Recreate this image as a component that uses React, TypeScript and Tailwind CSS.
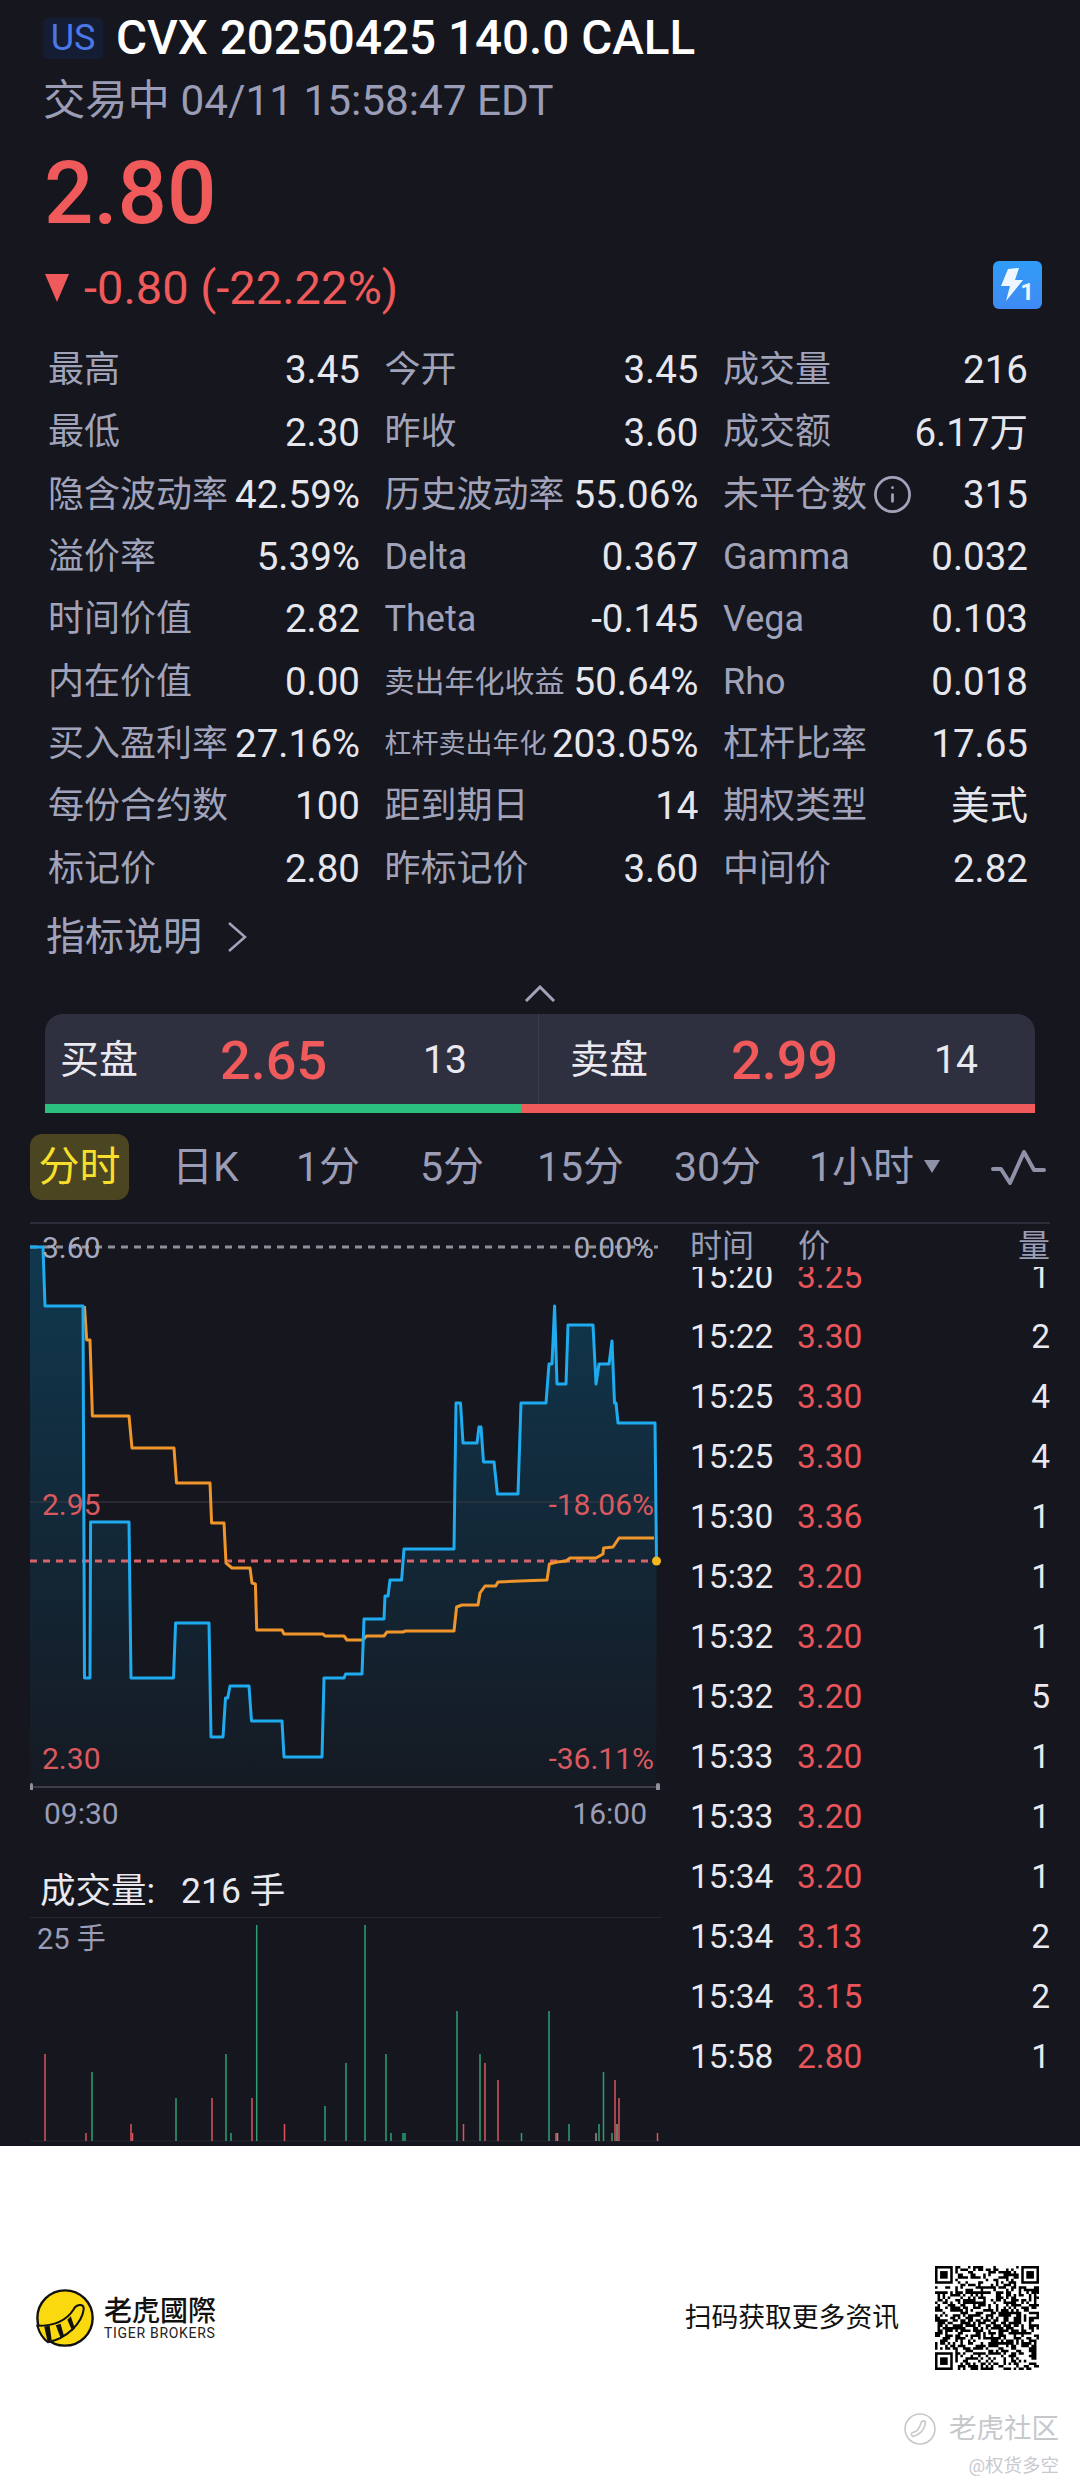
import React from "react";
import { Info } from "lucide-react";

const stats = [
  ["最高", "3.45", "今开", "3.45", "成交量", "216"],
  ["最低", "2.30", "昨收", "3.60", "成交额", "6.17万"],
  ["隐含波动率", "42.59%", "历史波动率", "55.06%", "未平仓数", "315"],
  ["溢价率", "5.39%", "Delta", "0.367", "Gamma", "0.032"],
  ["时间价值", "2.82", "Theta", "-0.145", "Vega", "0.103"],
  ["内在价值", "0.00", "卖出年化收益", "50.64%", "Rho", "0.018"],
  ["买入盈利率", "27.16%", "杠杆卖出年化", "203.05%", "杠杆比率", "17.65"],
  ["每份合约数", "100", "距到期日", "14", "期权类型", "美式"],
  ["标记价", "2.80", "昨标记价", "3.60", "中间价", "2.82"],
];

const trades = [
  ["15:20", "3.25", "1"],
  ["15:22", "3.30", "2"],
  ["15:25", "3.30", "4"],
  ["15:25", "3.30", "4"],
  ["15:30", "3.36", "1"],
  ["15:32", "3.20", "1"],
  ["15:32", "3.20", "1"],
  ["15:32", "3.20", "5"],
  ["15:33", "3.20", "1"],
  ["15:33", "3.20", "1"],
  ["15:34", "3.20", "1"],
  ["15:34", "3.13", "2"],
  ["15:34", "3.15", "2"],
  ["15:58", "2.80", "1"],
];

const blueLine =
  "30,1247 43,1247 45,1306 83,1306 84.5,1678 90,1678 90.6,1522 129,1522 131,1678 173.5,1678 175.6,1623 209,1623 211,1737 223,1737 225.5,1698 227.7,1698 230,1686 249,1686 251.5,1721 282,1721 284,1757 322,1757 324,1678 344,1678 345.6,1674 362,1674 364,1619 384,1619 385,1596 388,1596 390,1580 401.6,1580 404,1549 454,1549 456,1403 460.5,1403 463,1443 477,1443 479,1427 481,1427 483.5,1462 494,1462 497.4,1494 518,1494 521,1403 546,1403 549,1364 552,1364 554.6,1306 557,1384 566,1384 568,1325 593,1325 596,1384 599,1364 609,1364 612,1341 614.5,1403 616,1403 618,1423 655,1423 656.5,1561";

const orangeLine =
  "84.5,1306 86.7,1340 90,1340 92.4,1416 129,1416 132,1448 174,1448 176.5,1483 210,1483 211.6,1523 224,1523 226,1563 232,1568 250,1568 252,1583 255.4,1584 256.7,1630 282,1630 284,1634 323,1634 325,1636 344,1636 347,1640 363,1640 366.4,1636 384,1636 387,1632 403,1632 405.5,1631 454,1631 456.6,1607 462,1605 478,1605 480,1593 485,1586 495.7,1586 498,1582 520,1581 547,1580 549.4,1564 557,1562 566,1561 570,1558 596,1558 603,1554 603.6,1548 613,1547 619,1538 654,1538";

// x, bar top, colour
const volumeBars: [number, number, string][] = [
  [45, 2053, "#d9555c"], [86, 2132, "#d9555c"], [92, 2071, "#2f9e74"], [131, 2123, "#d9555c"], [132.5, 2132, "#d9555c"],
  [176, 2097, "#2f9e74"], [212, 2097, "#d9555c"], [226, 2053, "#2f9e74"], [231, 2132, "#2f9e74"], [252, 2097, "#d9555c"],
  [256.7, 1924, "#2f9e74"], [284.5, 2123, "#d9555c"], [325, 2105, "#2f9e74"], [346, 2062, "#2f9e74"], [365, 1924, "#2f9e74"],
  [386, 2053, "#2f9e74"], [391, 2132, "#2f9e74"], [403, 2132, "#2f9e74"], [405, 2132, "#2f9e74"], [457, 2010, "#2f9e74"],
  [463.5, 2123, "#d9555c"], [480, 2053, "#2f9e74"], [485, 2062, "#d9555c"], [498, 2079, "#d9555c"], [521.5, 2132, "#2f9e74"],
  [549, 2010, "#2f9e74"], [556, 2132, "#d9555c"], [557.5, 2132, "#a88a80"], [569, 2123, "#2f9e74"], [596, 2132, "#a88a80"],
  [599, 2123, "#2f9e74"], [603.5, 2071, "#2f9e74"], [612, 2132, "#2f9e74"], [615, 2079, "#d9555c"], [617, 2123, "#8f9a80"],
  [619, 2097, "#d9555c"], [657.5, 2132, "#d9555c"],
];

function qrPath() {
  const n = 41;
  let d = "";
  let seed = 73;
  const inFinder = (x: number, y: number) =>
    (x < 8 && y < 8) || (x >= n - 8 && y < 8) || (x < 8 && y >= n - 8);
  for (let y = 0; y < n; y++) {
    for (let x = 0; x < n; x++) {
      seed = (seed * 1103515245 + 12345) & 0x7fffffff;
      if (!inFinder(x, y) && (seed >> 16) % 100 < 50) d += `M${x} ${y}h1v1h-1z`;
    }
  }
  return d;
}

function Finder({ x, y }: { x: number; y: number }) {
  return (
    <>
      <rect x={x} y={y} width="7" height="7" fill="#000" />
      <rect x={x + 1} y={y + 1} width="5" height="5" fill="#fff" />
      <rect x={x + 2} y={y + 2} width="3" height="3" fill="#000" />
    </>
  );
}

function ChartLabel({ className, children }: { className: string; children: React.ReactNode }) {
  return <span className={`absolute text-[30px] leading-[36px] ${className}`}>{children}</span>;
}

const tabs = [
  { label: "日K", cls: "ml-[43px] w-[65px]" },
  { label: "1分", cls: "ml-[59px] w-[63px]" },
  { label: "5分", cls: "ml-[61px] w-[63px]" },
  { label: "15分", cls: "ml-[54px] w-[89px]" },
  { label: "30分", cls: "ml-[48px] w-[88px]" },
  { label: "1小时", cls: "ml-[47px] w-[108px]" },
];

export default function App() {
  return (
    <div className="w-[1080px] h-[2491px] bg-white overflow-hidden [font-family:Roboto,'Noto_Sans_CJK_SC',sans-serif]">
      <div className="h-[2146px] bg-[#15161e] overflow-hidden">
        {/* header */}
        <div className="pt-[18px] ml-[43px] h-[59px] flex items-center">
          <span className="w-[60px] h-[41px] rounded-[5px] bg-[#141d33] text-[#4a78e8] text-[36px] leading-[41px] text-center">US</span>
          <span className="ml-[13px] text-white text-[47.6px] leading-[41px] font-medium whitespace-nowrap">CVX 20250425 140.0 CALL</span>
        </div>
        <div className="mt-[19px] ml-[43px] h-[45px] text-[#9a9db5] text-[42.3px] leading-[46px] whitespace-nowrap">交易中 04/11 15:58:47 EDT</div>
        <div className="mt-[20px] ml-[44px] h-[100px] text-[#f05a5a] text-[87px] leading-[100px] font-medium">2.80</div>
        <div className="mt-[20px] ml-[45px] mr-[38px] h-[50px] flex items-center justify-between">
          <div className="flex items-center">
            <span className="w-0 h-0 border-l-[12px] border-r-[12px] border-t-[28px] border-l-transparent border-r-transparent border-t-[#f05a5a]" />
            <span className="ml-[15px] text-[#f05a5a] text-[47px] leading-[50px] whitespace-nowrap">-0.80 (-22.22%)</span>
          </div>
          <div className="relative mb-[7px] w-[49px] h-[48px] rounded-[6px] bg-gradient-to-b from-[#2f9cf6] to-[#3f8af5]">
            <svg viewBox="0 0 49 48" className="absolute inset-0 w-full h-full">
              <path d="M15 8 L26 7 L22 19 L30 19 L13 40 L17 25 L8 25 Z" fill="#eef6ff" />
            </svg>
            <span className="absolute right-[8px] bottom-[5px] text-[#eef6ff] text-[24px] leading-[24px] font-bold">1</span>
          </div>
        </div>

        {/* stats */}
        <div className="mt-[26px] ml-[48px] w-[980px] grid grid-cols-[312px_314px_305px] gap-x-[24.5px] auto-rows-[62.3px]">
          {stats.map((row) =>
            [0, 2, 4].map((i) => (
              <div key={row[i] + i} className="flex items-center justify-between">
                <span
                  className={`text-[#a0a3ba] flex items-center whitespace-nowrap ${
                    row[i] === "杠杆卖出年化" ? "text-[27px]" : row[i] === "卖出年化收益" ? "text-[30px]" : "text-[36px]"
                  }`}
                >
                  {row[i]}
                  {row[i] === "未平仓数" && <Info className="ml-[5px] w-[41px] h-[41px]" strokeWidth={1.6} />}
                </span>
                <span className="text-[#e6e7ee] text-[38.5px] whitespace-nowrap">{row[i + 1]}</span>
              </div>
            ))
          )}
        </div>

        <div className="mt-[17px] ml-[46px] h-[40px] flex items-center text-[#a0a3ba] text-[39px] leading-[40px]">
          指标说明
          <svg viewBox="0 0 22 30" className="ml-[24px] w-[22px] h-[30px]" fill="none" stroke="#a0a3ba" strokeWidth="2.5">
            <path d="M3 1 L19 15 L3 29" />
          </svg>
        </div>

        <div className="mt-[28px] flex justify-center h-[17px]">
          <svg viewBox="0 0 32 17" className="w-[32px] h-[17px]" fill="none" stroke="#a0a3ba" strokeWidth="3">
            <path d="M2 16 L16 2 L30 16" />
          </svg>
        </div>

        {/* bid / ask */}
        <div className="relative mt-[12px] ml-[45px] w-[990px] h-[99px] rounded-t-[18px] bg-[#2f303f] overflow-hidden">
          <div className="flex h-[90px] items-center text-[#e9e9ef]">
            <div className="w-[494px] flex items-center border-r border-[#3b3c4c] h-full pt-[4px]">
              <span className="ml-[15px] w-[160px] text-[39px]">买盘</span>
              <span className="w-[203px] text-[#f05a5a] text-[54px] font-medium">2.65</span>
              <span className="text-[39px]">13</span>
            </div>
            <div className="flex items-center h-full pt-[4px]">
              <span className="ml-[31px] w-[161px] text-[39px]">卖盘</span>
              <span className="w-[203px] text-[#f05a5a] text-[54px] font-medium">2.99</span>
              <span className="text-[39px]">14</span>
            </div>
          </div>
          <div className="flex h-[9px]">
            <div className="w-[476px] bg-[#2cc07f]" />
            <div className="flex-1 bg-[#f05a5a]" />
          </div>
        </div>

        {/* period tabs */}
        <div className="mt-[21px] ml-[30px] h-[66px] flex items-center text-[#9a9db5] text-[41px]">
          <span className="w-[99px] h-[66px] rounded-[12px] bg-[#4b4522] text-[#f7df2b] flex items-center justify-center pt-[3px]">分时</span>
          {tabs.map((tab) => (
            <span key={tab.label} className={`${tab.cls} whitespace-nowrap pt-[3px]`}>{tab.label}</span>
          ))}
          <span className="ml-[7px] w-0 h-0 border-l-[8px] border-r-[8px] border-t-[13px] border-l-transparent border-r-transparent border-t-[#8e91a8]" />
          <svg viewBox="993 1150 56 36" className="ml-[51px] w-[56px] h-[36px]" fill="none" stroke="#8e91a8" strokeWidth="4" strokeLinecap="round" strokeLinejoin="round">
            <path d="M995 1170 L1003 1170 L1012 1184 L1026 1153 L1036 1171 L1046 1171" />
          </svg>
        </div>

        <div className="mt-[22px] ml-[30px] w-[1020px] h-[2px] bg-[#2c2d38]" />

        <div className="flex">
          {/* left: charts */}
          <div className="ml-[30px] w-[632px]">
            <div className="relative h-[566px]">
              <svg viewBox="30 1224 632 566" className="w-[632px] h-[566px]" fill="none">
                <defs>
                  <linearGradient id="area" gradientUnits="userSpaceOnUse" x1="0" y1="1247" x2="0" y2="1785">
                    <stop offset="0" stopColor="#10384f" />
                    <stop offset="1" stopColor="#151a23" />
                  </linearGradient>
                </defs>
                <polygon points={`${blueLine} 656.5,1785 30,1785`} fill="url(#area)" />
                <line x1="30" x2="658" y1="1247" y2="1247" stroke="#8e909c" strokeWidth="3" strokeDasharray="7 6" />
                <line x1="30" x2="656" y1="1502" y2="1502" stroke="#3a3b46" strokeWidth="1" />
                <line x1="30" x2="656" y1="1561" y2="1561" stroke="#d9636b" strokeWidth="3" strokeDasharray="7 6" />
                <polyline points={orangeLine} stroke="#f0952a" strokeWidth="3" strokeLinejoin="round" />
                <polyline points={blueLine} stroke="#1fabf0" strokeWidth="3" strokeLinejoin="round" />
                <circle cx="656.5" cy="1561" r="4.5" fill="#f5b71f" />
                <line x1="32" x2="657" y1="1787" y2="1787" stroke="#4a4b55" strokeWidth="1.5" />
                <rect x="30" y="1783" width="3" height="8" rx="1.5" fill="#8e909c" />
                <rect x="656" y="1783" width="4" height="8" rx="2" fill="#8e909c" />
              </svg>
              <ChartLabel className="left-[12px] top-[6px] text-[#a8abc0]">3.60</ChartLabel>
              <ChartLabel className="right-[8px] top-[6px] text-[#a8abc0]">0.00%</ChartLabel>
              <ChartLabel className="left-[12px] top-[263px] text-[#d9595f]">2.95</ChartLabel>
              <ChartLabel className="right-[8px] top-[263px] text-[#d9595f]">-18.06%</ChartLabel>
              <ChartLabel className="left-[12px] top-[517px] text-[#d9595f]">2.30</ChartLabel>
              <ChartLabel className="right-[8px] top-[517px] text-[#d9595f]">-36.11%</ChartLabel>
            </div>
            <div className="h-[48px] pl-[14px] pr-[15px] flex items-center justify-between text-[#9a9db5] text-[30px]">
              <span>09:30</span>
              <span>16:00</span>
            </div>
            <div className="mt-[32px] h-[44px] pl-[10px] flex items-center text-[#e9e9ef] text-[35.5px] whitespace-nowrap">
              成交量:<span className="ml-[26px]">216 手</span>
            </div>
            <div className="relative mt-[3px] h-[229px] border-t border-[#24252e]">
              <svg viewBox="30 1917 632 229" className="w-[632px] h-[229px]">
                <line x1="30" x2="660" y1="2140" y2="2140" stroke="#24252e" strokeWidth="1" />
                {volumeBars.map(([x, top, color], i) => (
                  <rect key={i} x={x - 0.75} y={top} width="1.5" height={2140 - top} fill={color} />
                ))}
              </svg>
              <span className="absolute left-[7px] top-[3px] text-[#9a9db5] text-[29px] leading-[36px]">25 手</span>
            </div>
          </div>

          {/* right: trades */}
          <div className="ml-[28px] w-[360px]">
            <div className="relative h-[43px] text-[#9a9db5] text-[32px] leading-[44px]">
              <span>时间</span>
              <span className="absolute left-[108px]">价</span>
              <span className="absolute right-0">量</span>
            </div>
            <div className="h-[879px] overflow-hidden">
              <div className="-mt-[20px]">
                {trades.map(([time, price, qty], i) => (
                  <div key={i} className="flex h-[60px] items-center pt-[1px] text-[33.5px] text-[#e9e9ef]">
                    <span className="w-[107px]">{time}</span>
                    <span className="text-[#e8555a]">{price}</span>
                    <span className="ml-auto">{qty}</span>
                  </div>
                ))}
              </div>
            </div>
          </div>
        </div>
      </div>

      {/* footer */}
      <div className="relative h-[345px]">
        <div className="pt-[144px] pl-[36px] pr-[41px] flex items-center h-[200px]">
          <svg viewBox="20 20 170 170" className="w-[58px] h-[58px] shrink-0">
            <circle cx="105" cy="105" r="81" fill="#fbd90f" stroke="#111" strokeWidth="7" />
            <path d="M24 128 C 60 128 105 120 130 80 C 137 66 160 60 160 78 C 155 120 110 165 55 176 C 40 165 30 148 24 128 Z" fill="#fbd90f" stroke="#111" strokeWidth="6" />
            <path d="M44 130 L54 174 L66 170 L60 128 Z M78 126 L92 163 L102 157 L92 122 Z M112 110 L126 143 L134 136 L122 100 Z" fill="#111" />
          </svg>
          <div className="ml-[10px] w-[112px] -mt-[2px]">
            <div className="text-[#111] text-[28px] leading-[32px] font-medium [font-family:'Noto_Sans_CJK_TC',sans-serif] whitespace-nowrap">老虎國際</div>
            <div className="text-[#222] text-[14px] leading-[16px] tracking-[0.7px] whitespace-nowrap">TIGER BROKERS</div>
          </div>
          <span className="ml-auto text-[#111] text-[26.8px]">扫码获取更多资讯</span>
          <svg viewBox="0 0 41 41" className="ml-[36px] w-[104px] h-[104px] shrink-0">
            <path d={qrPath()} fill="#000" />
            <Finder x={0} y={0} />
            <Finder x={34} y={0} />
            <Finder x={0} y={34} />
          </svg>
        </div>
        <div className="absolute right-[21px] top-[267px] flex items-center text-[#c6c8cc] text-[27.5px] leading-[30px]">
          <svg viewBox="0 0 30 30" className="w-[32px] h-[32px] mr-[13px]" fill="none" stroke="#c6c8cc" strokeWidth="1.5">
            <circle cx="15" cy="15" r="14" />
            <path d="M20 8 C 20 16 14 21 8 22 C 6 20 7 18 9 18 C 13 17 15 13 16 9 C 17 7 19 7 20 8 Z" />
          </svg>
          老虎社区
        </div>
        <div className="absolute right-[21px] top-[308px] text-[#c8cad0] text-[18.5px] leading-[24px]">@权货多空</div>
      </div>
    </div>
  );
}
